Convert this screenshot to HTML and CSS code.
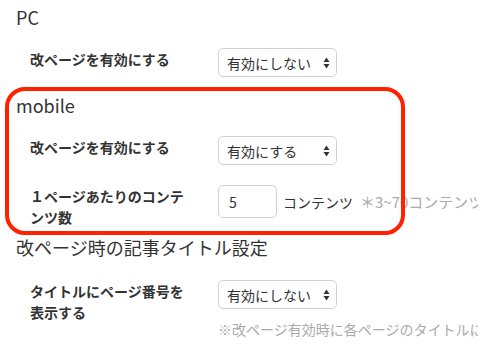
FILE: index.html
```html
<!DOCTYPE html>
<html lang="ja">

<head>
    <meta charset="UTF-8">
    <meta name="viewport" content="width=device-width, initial-scale=1.0">
    <title>改ページ設定</title>
    <link rel="stylesheet" href="styles.css">
</head>

<body>
    <section class="group">
        <h2 class="group-title">PC</h2>
        <div class="row">
            <label class="row-label" for="pcPaging">改ページを有効にする</label>
            <div class="select-wrap">
                <select id="pcPaging" class="select">
                    <option>有効にしない</option>
                    <option>有効にする</option>
                </select>
                <svg class="select-arrows" width="7" height="12" viewBox="0 0 7 12"><path d="M3.5 0.5 L6.5 5 L0.5 5 Z M0.5 7 L6.5 7 L3.5 11.5 Z" fill="#333"/></svg>
            </div>
        </div>
    </section>

    <section class="group group-mobile">
        <!-- red annotation frame drawn over the mobile block -->
        <div class="highlight"></div>
        <h2 class="group-title">mobile</h2>
        <div class="row">
            <label class="row-label" for="mobilePaging">改ページを有効にする</label>
            <div class="select-wrap">
                <select id="mobilePaging" class="select">
                    <option>有効にする</option>
                    <option>有効にしない</option>
                </select>
                <svg class="select-arrows" width="7" height="12" viewBox="0 0 7 12"><path d="M3.5 0.5 L6.5 5 L0.5 5 Z M0.5 7 L6.5 7 L3.5 11.5 Z" fill="#333"/></svg>
            </div>
        </div>
        <div class="row row-count">
            <label class="row-label" for="perPage">１ページあたりのコンテンツ数</label>
            <div class="field-inline">
                <input type="text" id="perPage" class="count-input" value="5">
                <span class="unit">コンテンツ</span>
                <span class="hint">＊3~70コンテンツ</span>
            </div>
        </div>
    </section>

    <section class="group group-title-setting">
        <h2 class="group-title">改ページ時の記事タイトル設定</h2>
        <div class="row">
            <label class="row-label" for="titleNumber">タイトルにページ番号を表示する</label>
            <div class="field-stack">
                <div class="select-wrap">
                    <select id="titleNumber" class="select">
                        <option>有効にしない</option>
                        <option>有効にする</option>
                    </select>
                    <svg class="select-arrows" width="7" height="12" viewBox="0 0 7 12"><path d="M3.5 0.5 L6.5 5 L0.5 5 Z M0.5 7 L6.5 7 L3.5 11.5 Z" fill="#333"/></svg>
                </div>
                <p class="note">※改ページ有効時に各ページのタイトルに</p>
            </div>
        </div>
    </section>
</body>

</html>
```

FILE: styles.css
```css
body {
    margin: 0;
    padding: 4px 16px 0;
    background-color: #fff;
    color: #333;
    font-family: "Noto Sans CJK JP", "Noto Sans", sans-serif;
    overflow: hidden;
}

.group-title {
    margin: 0;
    font-size: 18px;
    font-weight: normal;
    line-height: 26px;
}

.group + .group {
    margin-top: 15px;
}

.group-mobile + .group {
    margin-top: 6px;
}

.group-mobile {
    position: relative;
}

.highlight {
    position: absolute;
    top: -5px;
    left: -11px;
    width: 400px;
    height: 148px;
    border: 4px solid #fe2200;
    border-radius: 20px;
    box-sizing: border-box;
    pointer-events: none;
}

.row {
    display: flex;
    align-items: flex-start;
    margin-top: 18px;
    padding-left: 14px;
}

.row + .row {
    margin-top: 20px;
}

.group-title-setting .row {
    margin-top: 20px;
}

.row-label {
    flex: none;
    width: 188px;
    padding: 1px 28px 0 0;
    box-sizing: border-box;
    font-size: 14px;
    font-weight: bold;
    line-height: 21px;
}

.select-wrap {
    position: relative;
    width: 119px;
}

.select {
    display: block;
    width: 100%;
    height: 29px;
    padding: 0 20px 0 8px;
    border: 1px solid #d2d2d2;
    border-radius: 5px;
    background-color: #fff;
    color: #333;
    font-family: inherit;
    font-size: 14px;
    appearance: none;
    -webkit-appearance: none;
}

.select-arrows {
    position: absolute;
    top: 9px;
    right: 7px;
    pointer-events: none;
}

.field-inline {
    display: flex;
    align-items: center;
    white-space: nowrap;
    font-size: 14px;
}

.count-input {
    width: 59px;
    height: 33px;
    padding: 0 10px;
    border: 1px solid #d2d2d2;
    border-radius: 5px;
    box-sizing: border-box;
    color: #333;
    font-family: inherit;
    font-size: 14px;
}

.unit {
    margin-left: 6px;
}

.hint {
    margin-left: 7px;
    color: #aaa;
    font-size: 15px;
}

.field-stack {
    white-space: nowrap;
}

.note {
    margin: 11px 0 0;
    color: #aaa;
    font-size: 14px;
    line-height: 18px;
}
```
